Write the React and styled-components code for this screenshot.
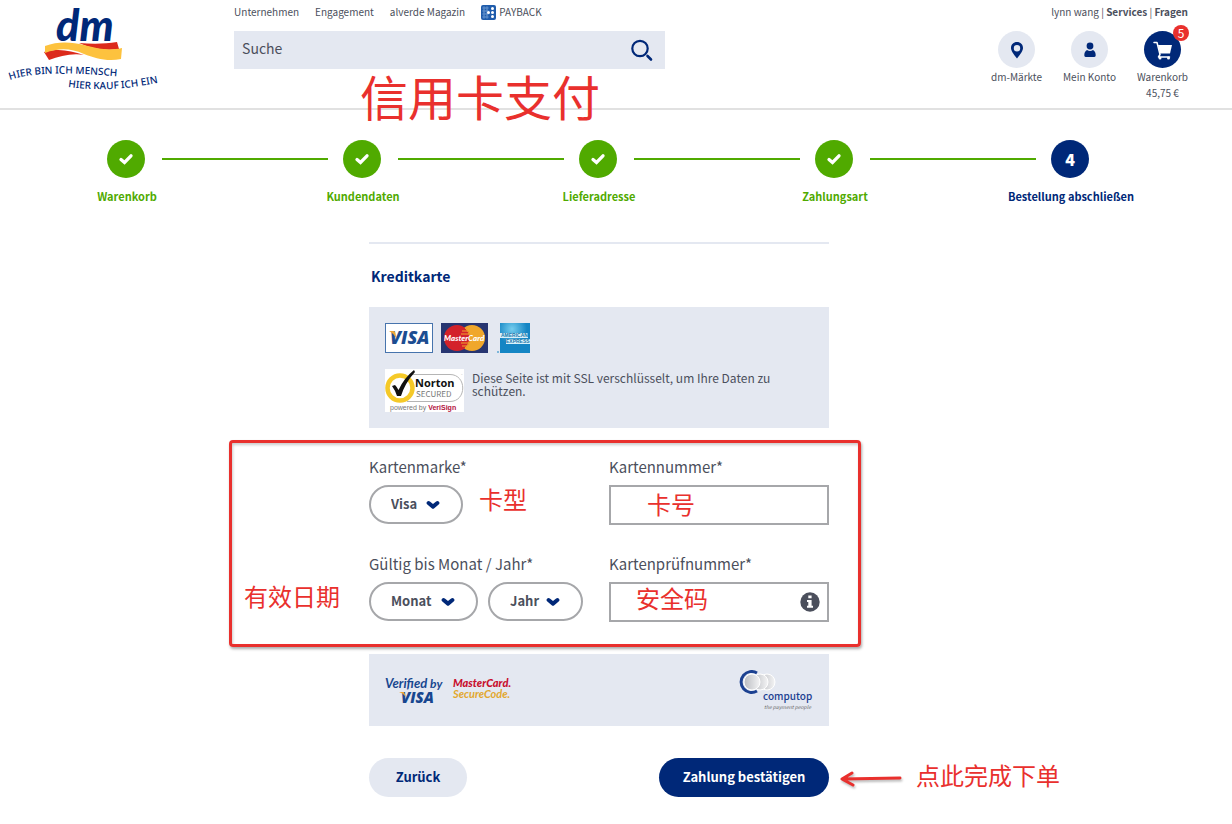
import React from "react";
import styled, { createGlobalStyle } from "styled-components";

const navy = "#002878";
const green = "#50aa00";
const red = "#e9302d";
const panel = "#e4e8f1";
const ink = "#4b4f5c";
const sans = '"Noto Sans CJK SC", "Noto Sans", sans-serif';

const GlobalStyle = createGlobalStyle`
  *, *::before, *::after { box-sizing: border-box; }
  body { margin: 0; background: #fff; color: ${ink}; font-family: ${sans}; font-size: 15px; line-height: 20px; }
  button, input, select { font: inherit; color: inherit; margin: 0; }
  a { color: inherit; text-decoration: none; }
`;

const Note = styled.span`
  position: absolute;
  left: ${(p) => p.$x}px;
  top: ${(p) => p.$y}px;
  color: ${red};
  font-size: ${(p) => (p.$large ? 48 : 24)}px;
  line-height: ${(p) => (p.$large ? 48 : 24)}px;
  white-space: nowrap;
  pointer-events: none;
`;

/* Header */
const Header = styled.header`
  display: grid;
  grid-template-columns: 19% 35% 1fr;
  min-height: 110px;
  border-bottom: 2px solid #e1e1e1;
`;
const LogoLink = styled.a`
  svg { display: block; }
`;
const Middle = styled.div`
  position: relative;
  padding-top: 3px;
`;
const TopNav = styled.nav`
  display: flex;
  align-items: center;
  gap: 16px;
  height: 18px;
  margin-bottom: 10px;
  font-size: 10px;
  white-space: nowrap;
  a { display: flex; align-items: center; gap: 3px; }
`;
const SearchForm = styled.form`
  display: flex;
  height: 38px;
  background: ${panel};
`;
const SearchInput = styled.input`
  flex: 1;
  min-width: 0;
  border: 0;
  padding: 0 8px 4px;
  background: transparent;
  font-size: 14px;
  &::placeholder { color: ${ink}; opacity: 1; }
`;
const SearchButton = styled.button`
  width: 46px;
  border: 0;
  padding: 0;
  background: transparent;
  svg { display: block; margin: auto; }
`;
const Account = styled.div`
  display: flex;
  flex-direction: column;
  align-items: flex-end;
  padding: 3px 33px 0 0;
`;
const ServiceLinks = styled.div`
  height: 18px;
  line-height: 18px;
  margin: 0 11px 10px 0;
  font-size: 10px;
  a { font-weight: 700; }
`;
const Shortcuts = styled.nav`
  display: flex;
`;
const Shortcut = styled.a`
  display: flex;
  flex-direction: column;
  align-items: center;
  width: 73px;
  font-size: 10px;
  line-height: 16px;
  white-space: nowrap;
`;
const ShortcutIcon = styled.span`
  position: relative;
  display: grid;
  place-items: center;
  width: 37px;
  height: 37px;
  margin-bottom: 1px;
  border-radius: 50%;
  background: ${(p) => (p.$active ? navy : panel)};
`;
const Badge = styled.span`
  position: absolute;
  top: -6px;
  right: -8px;
  width: 16px;
  height: 16px;
  border-radius: 50%;
  background: ${red};
  color: #fff;
  font-size: 12px;
  line-height: 16px;
  text-align: center;
`;

/* Checkout */
const Main = styled.main`
  padding: 30px 43px 24px 9px;
`;
const Steps = styled.ol`
  display: grid;
  grid-template-columns: repeat(5, 1fr);
  margin: 0 0 36px;
  padding: 0;
  list-style: none;
`;
const Step = styled.li`
  color: ${(p) => (p.$current ? navy : green)};
  font-size: 11px;
  font-weight: 700;
  text-align: center;
  &:first-child span:first-child, &:last-child span:last-child { visibility: hidden; }
`;
const StepTrack = styled.div`
  display: flex;
  align-items: center;
  margin-bottom: 8px;
`;
const StepLine = styled.span`
  flex: 1;
  height: 2px;
  background: ${green};
`;
const StepDot = styled.strong`
  display: grid;
  place-items: center;
  width: 38px;
  height: 38px;
  margin: 0 17px 0 15px;
  border-radius: 50%;
  background: ${(p) => (p.$current ? navy : green)};
  color: #fff;
  font-size: 16px;
`;
const Payment = styled.form`
  position: relative;
  max-width: 460px;
  margin: 0 auto;
  border-top: 2px solid ${panel};
`;
const Heading = styled.h1`
  margin: 22px 0 21px 2px;
  color: ${navy};
  font-size: 14px;
  line-height: 20px;
`;
const Panel = styled.section`
  padding: 16px;
  background: ${panel};
`;
const CardLogos = styled.div`
  display: flex;
  gap: 8px;
  margin-bottom: 16px;
  svg { display: block; }
`;
const Security = styled.div`
  display: flex;
  gap: 8px;
  font-size: 12px;
  line-height: 13px;
  svg { flex: none; display: block; }
  p { margin: 2px 0 0; }
`;
const Fields = styled.div`
  position: relative;
  display: grid;
  grid-template-columns: 1fr 220px;
  gap: 29px 20px;
  padding: 29px 0 32px;
  &::before {
    content: "";
    position: absolute;
    inset: 12px -32px 7px -140px;
    border: 3px solid ${red};
    border-radius: 4px;
    box-shadow: 1px 2px 3px #0005, inset 1px 2px 3px #0003;
    pointer-events: none;
  }
`;
const Field = styled.div`
  display: flex;
  flex-direction: column;
  gap: 8px;
  label { line-height: 20px; }
`;
const Row = styled.div`
  display: flex;
  gap: 10px;
`;
const SelectWrap = styled.span`
  position: relative;
  width: ${(p) => p.$width}px;
  svg { position: absolute; right: 23px; top: 15px; pointer-events: none; }
`;
const Select = styled.select`
  appearance: none;
  display: block;
  width: 100%;
  height: 39px;
  padding: 0 20px 2px;
  border: 2px solid #a6a7aa;
  border-radius: 20px;
  background: #fff;
  font-size: 13px;
  font-weight: 700;
`;
const InputBox = styled.div`
  display: flex;
  align-items: center;
  height: 40px;
  padding-right: 7px;
  border: 2px solid #a6a7aa;
`;
const TextInput = styled.input`
  flex: 1;
  min-width: 0;
  height: 100%;
  border: 0;
  padding: 0 8px;
  background: transparent;
`;
const InfoButton = styled.button`
  border: 0;
  padding: 0;
  background: transparent;
  svg { display: block; }
`;
const Partners = styled(Panel)`
  display: flex;
  justify-content: space-between;
  height: 72px;
  margin-bottom: 32px;
`;
const Actions = styled.div`
  position: relative;
  display: flex;
  justify-content: space-between;
`;
const Button = styled.button`
  width: ${(p) => (p.$primary ? 170 : 98)}px;
  height: 39px;
  border: 0;
  border-radius: 20px;
  padding: 0 0 2px;
  background: ${(p) => (p.$primary ? navy : panel)};
  color: ${(p) => (p.$primary ? "#fff" : navy)};
  font-size: 13px;
  font-weight: 700;
`;
const Arrow = styled.svg`
  position: absolute;
  left: 468px;
  top: 10px;
  filter: drop-shadow(1px 2px 1px #0004);
`;

const DmLogo = () => (
  <svg width="170" height="100" viewBox="0 0 170 100" role="img" aria-label="dm">
    <defs>
      <path id="line1" d="M10 80 C32 72 70 72 125 77" />
      <path id="line2" d="M68 87 C98 91 128 90 170 80" />
    </defs>
    <text x="56" y="41" fontFamily="Lato" fontWeight="900" fontStyle="italic" fontSize="43" fill={navy}>dm</text>
    <path d="M79 43 C92 44 105 44 117 42 L119 49 C105 51 92 49 79 43Z" fill="#dc2a1b" />
    <path d="M44 52 C60 48 70 51 84 55 C72 53 60 56 49 60Z" fill="#dc2a1b" />
    <path d="M45 46 C58 41 72 42 84 45 C99 49 109 51 122 48 L121 59 C107 62 95 58 84 54 C70 48 59 48 45 53Z" fill="#fdc23e" />
    <g fontFamily="Noto Sans" fontSize="10" fontWeight="500" fill={navy}>
      <text><textPath href="#line1">HIER BIN ICH MENSCH</textPath></text>
      <text><textPath href="#line2">HIER KAUF ICH EIN</textPath></text>
    </g>
  </svg>
);

const PaybackIcon = () => (
  <svg width="15" height="15" viewBox="0 0 15 15" aria-hidden="true">
    <rect width="15" height="15" rx="2" fill="#1f5cab" />
    <g fill="none" stroke="#8fb6e2" strokeWidth=".6">
      {[3, 6, 9, 12].map((y) => [3, 6].map((x) => <circle key={`${x}-${y}`} cx={x} cy={y} r="1.1" />))}
    </g>
    <g fill="#fff">
      <circle cx="11.5" cy="3.5" r="1.5" /><circle cx="11.5" cy="7.5" r="1.5" />
      <circle cx="11.5" cy="11.5" r="1.5" /><circle cx="7.5" cy="7.5" r="1.5" />
    </g>
  </svg>
);

const SearchIcon = () => (
  <svg width="24" height="24" viewBox="0 0 24 24" fill="none" stroke={navy} aria-hidden="true">
    <circle cx="10" cy="10.5" r="7.7" strokeWidth="2.2" />
    <path d="M17.500 18 L21 21.500" strokeWidth="2.6" strokeLinecap="round" />
  </svg>
);

const PinIcon = () => (
  <svg width="14" height="18" viewBox="0 0 14 18" aria-hidden="true">
    <path d="M7 1 C3.500 1 1 3.500 1 6.900 C1 9.500 3.200 12.500 7 17.500 C10.800 12.500 13 9.500 13 6.900 C13 3.500 10.500 1 7 1Z M7 4 A3.200 3.200 0 1 1 7 10.400 A3.200 3.200 0 1 1 7 4Z" fillRule="evenodd" fill={navy} />
  </svg>
);

const UserIcon = () => (
  <svg width="14" height="16" viewBox="0 0 14 16" aria-hidden="true" fill={navy}>
    <circle cx="7" cy="4" r="3.400" />
    <path d="M4 8 Q7 10 10 8 C12 9 12.800 11 12.700 13.500 Q12.500 15 11 15 H3 Q1.500 15 1.300 13.500 C1.200 11 2 9 4 8Z" />
  </svg>
);

const CartIcon = () => (
  <svg width="20" height="20" viewBox="0 0 20 20" aria-hidden="true">
    <path d="M1 2.500 H4 L7 14.500 L5.500 17 H16.500" fill="none" stroke="#fff" strokeWidth="1.500" strokeLinejoin="round" strokeLinecap="round" />
    <path d="M5 5 H19 L17 13.500 H7Z" fill="#fff" />
    <circle cx="7" cy="18" r="1.500" fill="#fff" /><circle cx="15.500" cy="18" r="1.500" fill="#fff" />
  </svg>
);

const CheckIcon = () => (
  <svg width="16" height="14" viewBox="0 0 16 14" fill="none" aria-hidden="true">
    <path d="M3 7.500 L6.500 10.500 L13 3.800" stroke="#fff" strokeWidth="3.300" strokeLinecap="round" />
  </svg>
);

const Chevron = () => (
  <svg width="14" height="10" viewBox="0 0 14 10" fill="none" aria-hidden="true">
    <path d="M2.600 3 L7 6.600 L11.400 3" stroke={navy} strokeWidth="4" strokeLinecap="round" strokeLinejoin="round" />
  </svg>
);

const InfoIcon = () => (
  <svg width="20" height="20" viewBox="0 0 20 20" aria-hidden="true">
    <circle cx="10" cy="10" r="9.700" fill={ink} />
    <path d="M8.300 3.500 H11.600 V6.300 H8.300Z M7 8 H11.600 V13.700 H13 V15.700 H7 V13.700 H8.300 V10 H7Z" fill="#fff" />
  </svg>
);

const VisaCard = () => (
  <svg width="48" height="30" viewBox="0 0 48 30" role="img" aria-label="Visa">
    <rect x=".5" y=".5" width="47" height="29" fill="#fff" stroke="#4774ad" />
    <text x="5" y="21" fontFamily="Open Sans" fontWeight="800" fontStyle="italic" fontSize="18" fill="#1c4d91">VISA</text>
    <path d="M4 8 H8.500 Q10 8 10.300 9.500 L11.500 16 Q9 10.500 4 8Z" fill="#eda736" />
  </svg>
);

const MasterCard = () => (
  <svg width="48" height="30" viewBox="0 0 48 30" role="img" aria-label="MasterCard">
    <rect width="47" height="30" fill="#273571" />
    <circle cx="31" cy="15" r="13" fill="#f0a72b" />
    <circle cx="16" cy="15" r="13" fill="#d3222a" />
    <path d="M24 5 A13 13 0 0 1 24 25 M21 8 H27 M20 11 H28 M20 20 H28 M21 23 H27" stroke="#f0a72b" fill="none" />
    <text x="3" y="18" fontFamily="Lato" fontWeight="900" fontStyle="italic" fontSize="8" fill="#fff">MasterCard</text>
  </svg>
);

const AmexCard = () => (
  <svg width="34" height="30" viewBox="0 0 34 30" role="img" aria-label="American Express">
    <defs>
      <radialGradient id="amex" cx="40%" cy="20%"><stop stopColor="#75cdee" /><stop offset="1" stopColor="#1485c4" /></radialGradient>
    </defs>
    <rect x="3" width="30" height="30" fill="url(#amex)" />
    <rect x="3" y="10" width="28" height="5" fill="#d7f0fa" /><rect x="9" y="16" width="24" height="5" fill="#d7f0fa" />
    <g fontFamily="Liberation Sans" fontWeight="700" fontSize="5" fill="#1677ab">
      <text x="4" y="14">AMERICAN</text><text x="9" y="20">EXPRESS</text>
    </g>
    <circle cx="1" cy="29" r="1" fill="#5ba6d2" />
  </svg>
);

const NortonSeal = () => (
  <svg width="79" height="43" viewBox="0 0 79 43" role="img" aria-label="Norton Secured, powered by VeriSign">
    <rect width="79" height="43" fill="#fff" />
    <path d="M26 5.500 H65 C82 5.500 82 32.500 65 32.500 H22" fill="none" stroke="#b5b5b5" />
    <circle cx="15" cy="19" r="12.500" fill="#fff" stroke="#f5c928" strokeWidth="4.500" />
    <path d="M7 17 L10 16 Q12 18 13.500 21 Q19 9 29 1 L30 3 Q20 14 16 27 H12 Q10 21 7 17Z" fill="#111" />
    <text x="30" y="18" fontFamily="Open Sans" fontWeight="700" fontSize="11" fill="#111">Norton</text>
    <text x="31" y="28" fontFamily="Noto Sans CJK SC" fontSize="8" fill="#777">SECURED</text>
    <text x="76" y="7" fontFamily="Lato" fontSize="2" fill="#777">™</text>
    <text x="5" y="41" fontFamily="Liberation Sans" fontSize="7" fill="#777">powered by <tspan fill="#b3123d" fontWeight="700">VeriSign</tspan></text>
  </svg>
);

const SecureLogos = () => (
  <svg width="130" height="40" viewBox="0 0 130 40" role="img" aria-label="Verified by Visa, MasterCard SecureCode">
    <g fill="#17468f" fontFamily="Lato" fontStyle="italic" fontWeight="700">
      <text x="0" y="18" fontSize="13">Verified <tspan fontSize="12">by</tspan></text>
      <text x="16" y="33" fontFamily="Open Sans" fontWeight="800" fontSize="15">VISA</text>
    </g>
    <path d="M14 22 H19 L21 27 Q18 23 14 22Z" fill="#eda736" />
    <g fontFamily="Lato" fontStyle="italic" fontSize="11">
      <text x="68" y="17" fontWeight="900" fill="#c8102e">MasterCard.</text>
      <text x="68" y="28" fontWeight="700" fill="#e2a72e">SecureCode.</text>
    </g>
  </svg>
);

const ComputopLogo = () => (
  <svg width="74" height="44" viewBox="0 0 74 44" role="img" aria-label="computop, the payment people">
    <defs>
      <linearGradient id="disc"><stop stopColor="#b9bbc0" /><stop offset="1" stopColor="#f4f4f5" /></linearGradient>
    </defs>
    <g fill="url(#disc)" stroke="#fff">
      <circle cx="28" cy="12" r="8" /><circle cx="21" cy="12" r="8" /><circle cx="13" cy="12" r="8" />
    </g>
    <path d="M18 3 A10.500 10.500 0 1 0 18 21" fill="none" stroke="#1c4191" strokeWidth="3" />
    <text x="24" y="30" fontFamily="Noto Sans CJK SC" fontWeight="500" fontSize="10" fill="#1c4191">computop</text>
    <text x="25" y="39" fontFamily="Noto Sans CJK SC" fontStyle="italic" fontSize="5" fill="#666">the payment people</text>
  </svg>
);

const steps = ["Warenkorb", "Kundendaten", "Lieferadresse", "Zahlungsart", "Bestellung abschließen"];

const Dropdown = ({ id, label, width, value }) => (
  <SelectWrap $width={width}>
    <Select id={id} aria-label={label} defaultValue={value}>
      <option>{value}</option>
    </Select>
    <Chevron />
  </SelectWrap>
);

export default function App() {
  return (
    <>
      <GlobalStyle />
      <Header>
        <LogoLink href="#"><DmLogo /></LogoLink>
        <Middle>
          <TopNav>
            <a href="#">Unternehmen</a>
            <a href="#">Engagement</a>
            <a href="#">alverde Magazin</a>
            <a href="#"><PaybackIcon />PAYBACK</a>
          </TopNav>
          <SearchForm role="search">
            <SearchInput type="search" placeholder="Suche" aria-label="Suche" />
            <SearchButton type="button" aria-label="Suche"><SearchIcon /></SearchButton>
          </SearchForm>
          <Note $large $x={126} $y={71}>信用卡支付</Note>
        </Middle>
        <Account>
          <ServiceLinks>lynn wang | <a href="#">Services</a> | <a href="#">Fragen</a></ServiceLinks>
          <Shortcuts>
            <Shortcut href="#"><ShortcutIcon><PinIcon /></ShortcutIcon>dm-Märkte</Shortcut>
            <Shortcut href="#"><ShortcutIcon><UserIcon /></ShortcutIcon>Mein Konto</Shortcut>
            <Shortcut href="#">
              <ShortcutIcon $active><CartIcon /><Badge>5</Badge></ShortcutIcon>
              Warenkorb<span>45,75 €</span>
            </Shortcut>
          </Shortcuts>
        </Account>
      </Header>
      <Main>
        <Steps>
          {steps.map((name, i) => {
            const current = i === steps.length - 1;
            return (
              <Step key={name} $current={current}>
                <StepTrack>
                  <StepLine />
                  <StepDot $current={current}>{current ? i : <CheckIcon />}</StepDot>
                  <StepLine />
                </StepTrack>
                {name}
              </Step>
            );
          })}
        </Steps>
        <Payment>
          <Heading>Kreditkarte</Heading>
          <Panel>
            <CardLogos><VisaCard /><MasterCard /><AmexCard /></CardLogos>
            <Security>
              <NortonSeal />
              <p>Diese Seite ist mit SSL verschlüsselt, um Ihre Daten zu schützen.</p>
            </Security>
          </Panel>
          <Fields>
            <Field>
              <label htmlFor="brand">Kartenmarke*</label>
              <Row><Dropdown id="brand" width={94} value="Visa" /></Row>
            </Field>
            <Field>
              <label htmlFor="number">Kartennummer*</label>
              <InputBox><TextInput id="number" type="text" /></InputBox>
            </Field>
            <Field>
              <label htmlFor="month">Gültig bis Monat / Jahr*</label>
              <Row>
                <Dropdown id="month" width={109} value="Monat" />
                <Dropdown id="year" label="Jahr" width={95} value="Jahr" />
              </Row>
            </Field>
            <Field>
              <label htmlFor="code">Kartenprüfnummer*</label>
              <InputBox>
                <TextInput id="code" type="text" />
                <InfoButton type="button" aria-label="Info"><InfoIcon /></InfoButton>
              </InputBox>
            </Field>
            <Note $x={110} $y={59}>卡型</Note>
            <Note $x={278} $y={64}>卡号</Note>
            <Note $x={-125} $y={156}>有效日期</Note>
            <Note $x={267} $y={158}>安全码</Note>
          </Fields>
          <Partners><SecureLogos /><ComputopLogo /></Partners>
          <Actions>
            <Button type="button">Zurück</Button>
            <Button type="button" $primary>Zahlung bestätigen</Button>
            <Arrow width="68" height="22" viewBox="0 0 68 22" fill="none" stroke={red} strokeWidth="3" strokeLinecap="round" strokeLinejoin="round" aria-hidden="true">
              <path d="M63 10 L5 11 M15 5 L5 11 L16 17" />
            </Arrow>
            <Note $x={547} $y={5}>点此完成下单</Note>
          </Actions>
        </Payment>
      </Main>
    </>
  );
}
